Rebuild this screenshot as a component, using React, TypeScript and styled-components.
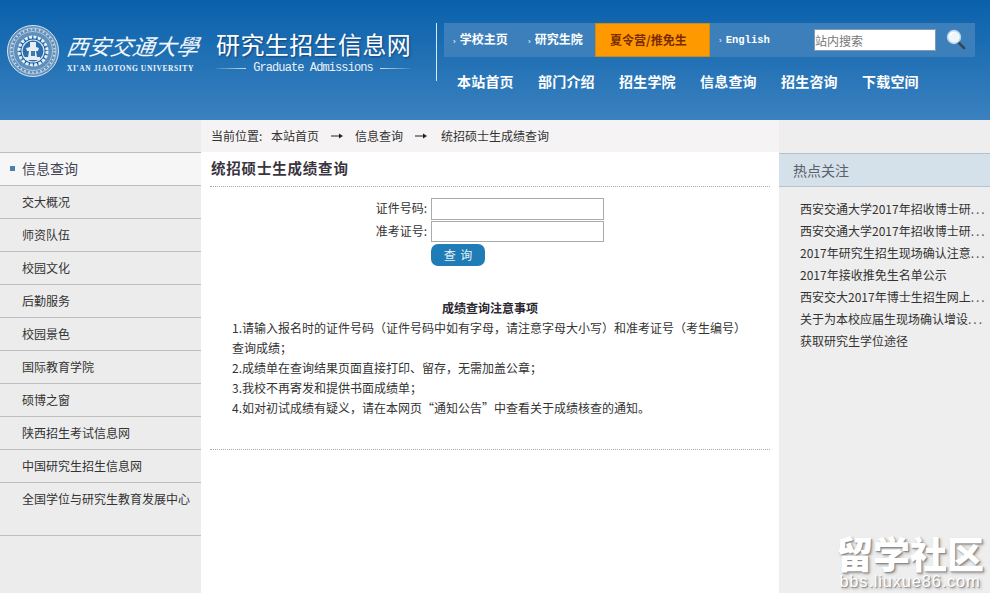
import React from "react";
import styled, { createGlobalStyle } from "styled-components";

const cjk = `"Noto Sans CJK SC", "Liberation Sans", sans-serif`;

const Global = createGlobalStyle`
  html, body { margin: 0; padding: 0; height: 100%; overflow: hidden; background: #ececec; }
  body { font: 12px/20px ${cjk}; color: #333; }
  #root { height: 100%; }
  * { box-sizing: border-box; }
`;

const Page = styled.div`
  position: relative;
  width: 990px;
  height: 593px;
  overflow: hidden;
  display: flex;
  flex-direction: column;
`;

const Header = styled.header`
  height: 120px;
  flex: none;
  background: linear-gradient(#0961ab, #3b81bf);
  display: flex;
  padding: 23px 15px 0 7px;
`;

const Brand = styled.div`
  width: 429px;
  flex: none;
  display: flex;
  gap: 8px;
  padding-top: 2px;
  height: 58px;
`;

const BrandSchool = styled.div`
  width: 141px;
  flex: none;
  color: #f2f6fa;
`;

const Calligraphy = styled.div`
  font: italic 400 22px/34px ${cjk};
  white-space: nowrap;
  width: 134px;
  margin-top: 3px;
  transform: skewX(-8deg);
`;

const SchoolEn = styled.div`
  font: bold 7.5px/10px "Liberation Serif", serif;
  white-space: nowrap;
  letter-spacing: 0.6px;
  margin-top: 2px;
`;

const BrandSite = styled.div`
  color: #fff;
  width: 198px;
  flex: none;
`;

const SiteName = styled.div`
  font: 400 24px/32px ${cjk};
  letter-spacing: 0.4px;
  white-space: nowrap;
  text-shadow: 1px 1px 2px rgba(10, 50, 100, 0.7);
  margin-top: 3px;
`;

const SiteSub = styled.div`
  display: flex;
  align-items: center;
  gap: 7px;
  font: 12px/14px "Liberation Mono", monospace;
  letter-spacing: -0.9px;
  color: #e8f0f8;
  white-space: nowrap;
  margin-top: 1px;
  padding-right: 4px;

  &::before, &::after {
    content: "";
    flex: 1;
    height: 1px;
    background: linear-gradient(90deg, rgba(255,255,255,0.1), rgba(255,255,255,0.75));
  }
  &::after { background: linear-gradient(90deg, rgba(255,255,255,0.75), rgba(255,255,255,0.1)); }
`;

const HeadRight = styled.div`
  flex: 1;
  height: 58px;
  border-left: 1px solid #dce9f4;
  padding-left: 7px;
`;

const TopBar = styled.div`
  height: 34px;
  width: 531px;
  background: #3c7fbb;
  display: flex;
  align-items: center;
  color: #fff;
`;

const TopLink = styled.a<{ $w: number; $mono?: boolean }>`
  width: ${(p) => p.$w}px;
  flex: none;
  padding-left: 9px;
  font: bold ${(p) => (p.$mono ? `10.5px/36px "Liberation Mono", monospace` : `12px/36px ${cjk}`)};
  white-space: nowrap;

  &::before {
    content: "›";
    font: 8px/34px "Liberation Sans", sans-serif;
    margin-right: 4px;
  }
`;

const HotTab = styled.a`
  width: 115px;
  height: 34px;
  flex: none;
  background: #ff9900;
  border: 1px solid #c98a20;
  color: #7a2c00;
  font: bold 12px/32px ${cjk};
  padding-left: 14px;
  white-space: nowrap;
`;

const SearchBox = styled.input`
  width: 122px;
  height: 22px;
  flex: none;
  margin-left: 45px;
  border: 1px solid #7c9cbc;
  background: #fff;
  padding: 0;
  font: 12px/20px ${cjk};
  outline: none;
  &::placeholder { color: #777; opacity: 1; }
`;

const SearchIcon = styled.svg`
  width: 20px;
  height: 22px;
  margin-left: 10px;
  flex: none;
`;

const MainNav = styled.nav`
  display: flex;
  gap: 24.2px;
  padding: 13px 0 0 13px;
  color: #fff;
  font: bold 14px/22px ${cjk};
  letter-spacing: 0.2px;
  white-space: nowrap;
`;

const Body = styled.div`
  flex: 1;
  display: flex;
  min-height: 0;
  background: #ececec;
`;

const Side = styled.aside`
  width: 201px;
  flex: none;
  padding-top: 32px;
`;

const SideList = styled.ul`
  list-style: none;
  margin: 0;
  padding: 0;
  border-top: 1px solid #bdbdbd;
`;

const SideItem = styled.li<{ $active?: boolean; $tall?: boolean }>`
  position: relative;
  height: ${(p) => (p.$tall ? 53 : 33)}px;
  border-bottom: 1px solid #bdbdbd;
  padding-left: 22px;
  font: ${(p) => (p.$active ? 14 : 12)}px/31px ${cjk};
  color: ${(p) => (p.$active ? "#445" : "#333")};
  background: ${(p) => (p.$active ? "#f6f6f6" : "transparent")};
  white-space: nowrap;

  &::before {
    content: "";
    display: ${(p) => (p.$active ? "block" : "none")};
    position: absolute;
    left: 10px;
    top: 13px;
    width: 5px;
    height: 5px;
    background: #4a80ad;
  }
`;

const Center = styled.main`
  width: 578px;
  flex: none;
  background: #fff;
  display: flex;
  flex-direction: column;
`;

const Crumbs = styled.div`
  height: 32px;
  flex: none;
  background: #f5f3f3;
  padding-left: 10px;
  display: flex;
  align-items: center;
  color: #333;
  white-space: nowrap;
`;

const CrumbLabel = styled.span`
  width: 60px;
  flex: none;
`;

const CrumbArrow = styled.svg`
  width: 12px;
  height: 8px;
  margin: 0 12px;
  flex: none;
`;

const CrumbCurrent = styled.span`
  margin-left: 2px;
`;

const Article = styled.div`
  margin: 0 9px;
  width: 560px;
  border-bottom: 1px dotted #aaa;
  padding-bottom: 31px;
`;

const Title = styled.h1`
  margin: 0;
  height: 35px;
  border-bottom: 1px dotted #aaa;
  padding-left: 1px;
  font: bold 14.5px/32px ${cjk};
  letter-spacing: 0.8px;
  color: #3a3440;
`;

const Form = styled.form`
  padding-top: 11px;
  display: flex;
  flex-direction: column;
  gap: 1px;
`;

const FormRow = styled.label<{ $h: number }>`
  display: flex;
  align-items: center;
  height: ${(p) => p.$h}px;
  gap: 4px;
  color: #333;
`;

const FormLabel = styled.span`
  width: 217px;
  text-align: right;
  line-height: 20px;
  padding-bottom: 2px;
  flex: none;
`;

const FormInput = styled.input`
  width: 173px;
  height: 100%;
  border: 1px solid #aaa;
  background: #fff;
  padding: 0 2px;
  outline: none;
`;

const QueryButton = styled.button`
  margin: 1px 0 0 221px;
  width: 54px;
  height: 22px;
  border: 0;
  border-radius: 7px;
  background: #1f7cb6;
  color: #e8f2f8;
  font: 12px/20px ${cjk};
  word-spacing: 2px;
  padding: 0;
`;

const Notes = styled.section`
  margin-top: 32px;
  padding-left: 22px;
  width: 540px;
`;

const NotesTitle = styled.h2`
  margin: 0 0 0 -22px;
  width: 560px;
  text-align: center;
  font: bold 12px/20px ${cjk};
  color: #2b2630;
`;

const NoteLine = styled.p`
  margin: 0;
  font: 12px/20px ${cjk};
  color: #333;
  width: 518px;
`;

const Hot = styled.aside`
  flex: 1;
  padding-top: 33px;
  background: #eee;
`;

const HotHead = styled.div`
  height: 34px;
  background: #d4e0ea;
  border-top: 1px solid #b8c2cb;
  border-bottom: 1px solid #b8c2cb;
  padding-left: 14px;
  font: 14px/32px ${cjk};
  color: #5b6168;
`;

const HotList = styled.ul`
  list-style: none;
  margin: 0;
  padding: 11px 0 0 21px;
`;

const HotItem = styled.li`
  font: 12px/22px ${cjk};
  color: #333;
  white-space: nowrap;
`;

const Ellipsis = styled.span`
  letter-spacing: 2px;
  color: #555;
`;

const Watermark = styled.div`
  position: absolute;
  right: 5px;
  bottom: 3px;
  width: 150px;
  color: #fff;
  text-align: center;
  text-shadow: 1px 1px 1px #888, 2px 2px 3px #aaa;
`;

const WatermarkTitle = styled.div`
  font: 900 37px/36px ${cjk};
  white-space: nowrap;
  margin-bottom: 2px;
`;

const WatermarkUrl = styled.div`
  font: 16.5px/17px "Liberation Sans", sans-serif;
  letter-spacing: 0.8px;
  white-space: nowrap;
`;

const Seal = () => (
  <svg width="52" height="52" viewBox="0 0 52 52" style={{ flex: "none" }}>
    <circle cx="26" cy="26" r="25.5" fill="#5f8fbb" stroke="#dbe6f0" strokeWidth="1" />
    <circle cx="26" cy="26" r="23" fill="none" stroke="#c5d6e6" strokeWidth="0.8" />
    <circle cx="26" cy="26" r="19.5" fill="none" stroke="#dfe9f2" strokeWidth="0.6" />
    <circle cx="26" cy="26" r="14" fill="#0f5a9e" stroke="#e6eef6" strokeWidth="3" strokeDasharray="3 1.4" />
    <circle cx="26" cy="26" r="11" fill="#2a6fac" stroke="#dce7f1" strokeWidth="1.2" />
    <path d="M23 17h6v5l3 1-1 3h-2l1 6h3v3H18v-3h3l1-6h-2l-1-3 4-1z" fill="#e6edf4" />
    <path d="M24 26h4v5h-4z" fill="#3f79ae" />
    <circle cx="26" cy="26" r="21.5" fill="none" stroke="#e9f0f6" strokeWidth="2" strokeDasharray="1.5 2.6" opacity="0.8" />
  </svg>
);

const Arrow = () => (
  <CrumbArrow viewBox="0 0 12 8">
    <path d="M0 4h10" stroke="#222" strokeWidth="1" />
    <path d="M8 1.5 12 4 8 6.5z" fill="#222" />
  </CrumbArrow>
);

const sideItems = ["交大概况", "师资队伍", "校园文化", "后勤服务", "校园景色", "国际教育学院", "硕博之窗", "陕西招生考试信息网", "中国研究生招生信息网"];
const navItems = ["本站首页", "部门介绍", "招生学院", "信息查询", "招生咨询", "下载空间"];
const hotItems: [string, boolean][] = [
  ["西安交通大学2017年招收博士研", true],
  ["西安交通大学2017年招收博士研", true],
  ["2017年研究生招生现场确认注意", true],
  ["2017年接收推免生名单公示", false],
  ["西安交大2017年博士生招生网上", true],
  ["关于为本校应届生现场确认增设", true],
  ["获取研究生学位途径", false],
];

export default function App() {
  return (
    <Page>
      <Global />
      <Header>
        <Brand>
          <Seal />
          <BrandSchool>
            <Calligraphy>西安交通大學</Calligraphy>
            <SchoolEn>XI'AN JIAOTONG UNIVERSITY</SchoolEn>
          </BrandSchool>
          <BrandSite>
            <SiteName>研究生招生信息网</SiteName>
            <SiteSub>Graduate Admissions</SiteSub>
          </BrandSite>
        </Brand>
        <HeadRight>
          <TopBar>
            <TopLink $w={75}>学校主页</TopLink>
            <TopLink $w={76}>研究生院</TopLink>
            <HotTab>夏令营/推免生</HotTab>
            <TopLink $w={59} $mono>English</TopLink>
            <SearchBox placeholder="站内搜索" />
            <SearchIcon viewBox="0 0 20 22">
              <path d="M12 13l6 6" stroke="#33475c" strokeWidth="2.6" strokeLinecap="round" />
              <circle cx="8" cy="8" r="6.5" fill="#eef6fb" stroke="#bcd4e6" strokeWidth="1.4" />
              <path d="M4 7a4 4 0 0 1 4-3.5" stroke="#fff" strokeWidth="1.4" fill="none" />
            </SearchIcon>
          </TopBar>
          <MainNav>
            {navItems.map((n) => (
              <span key={n}>{n}</span>
            ))}
          </MainNav>
        </HeadRight>
      </Header>
      <Body>
        <Side>
          <SideList>
            <SideItem $active>信息查询</SideItem>
            {sideItems.map((s) => (
              <SideItem key={s}>{s}</SideItem>
            ))}
            <SideItem $tall>全国学位与研究生教育发展中心</SideItem>
          </SideList>
        </Side>
        <Center>
          <Crumbs>
            <CrumbLabel>当前位置:</CrumbLabel>
            <span>本站首页</span>
            <Arrow />
            <span>信息查询</span>
            <Arrow />
            <CrumbCurrent>统招硕士生成绩查询</CrumbCurrent>
          </Crumbs>
          <Article>
            <Title>统招硕士生成绩查询</Title>
            <Form>
              <FormRow $h={22}>
                <FormLabel>证件号码:</FormLabel>
                <FormInput />
              </FormRow>
              <FormRow $h={21}>
                <FormLabel>准考证号:</FormLabel>
                <FormInput />
              </FormRow>
              <QueryButton type="button">查 询</QueryButton>
            </Form>
            <Notes>
              <NotesTitle>成绩查询注意事项</NotesTitle>
              <NoteLine>1.请输入报名时的证件号码（证件号码中如有字母，请注意字母大小写）和准考证号（考生编号）查询成绩；</NoteLine>
              <NoteLine>2.成绩单在查询结果页面直接打印、留存，无需加盖公章；</NoteLine>
              <NoteLine>3.我校不再寄发和提供书面成绩单；</NoteLine>
              <NoteLine>4.如对初试成绩有疑义，请在本网页“通知公告”中查看关于成绩核查的通知。</NoteLine>
            </Notes>
          </Article>
        </Center>
        <Hot>
          <HotHead>热点关注</HotHead>
          <HotList>
            {hotItems.map(([t, more], i) => (
              <HotItem key={i}>
                {t}
                {more && <Ellipsis>...</Ellipsis>}
              </HotItem>
            ))}
          </HotList>
        </Hot>
      </Body>
      <Watermark>
        <WatermarkTitle>留学社区</WatermarkTitle>
        <WatermarkUrl>bbs.liuxue86.com</WatermarkUrl>
      </Watermark>
    </Page>
  );
}
